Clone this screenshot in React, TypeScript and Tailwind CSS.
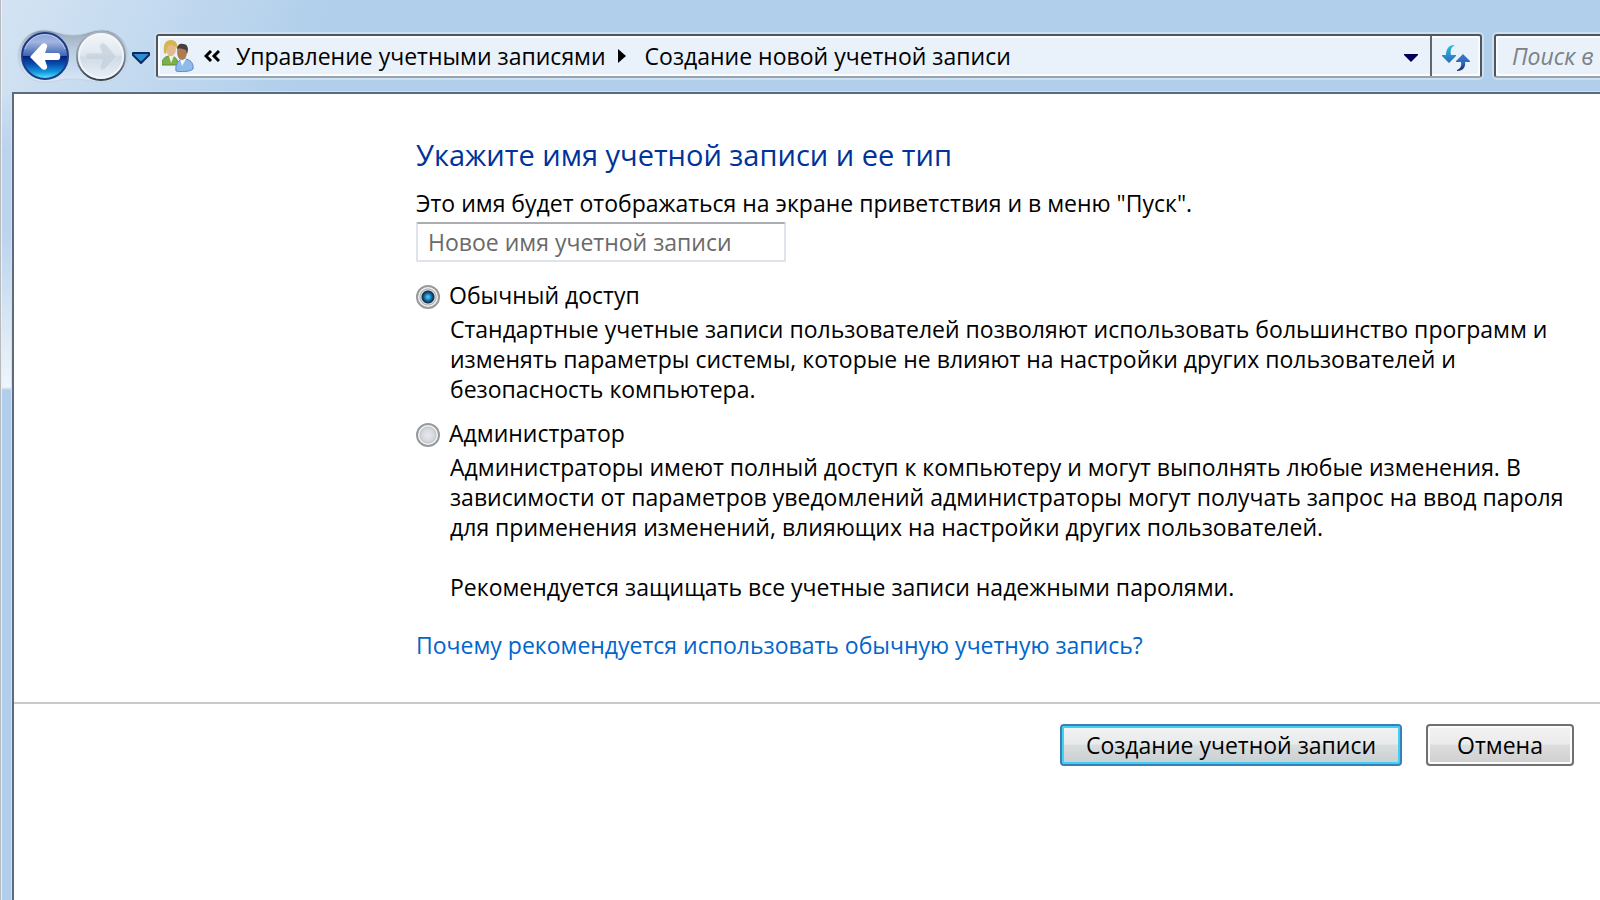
import React, { useState } from 'react'

interface AccountType {
    id: string;
    title: string;
    text: string[];
}

const accountTypes: AccountType[] = [
    {
        id: 'standard',
        title: 'Обычный доступ',
        text: [
            'Стандартные учетные записи пользователей позволяют использовать большинство программ и',
            'изменять параметры системы, которые не влияют на настройки других пользователей и',
            'безопасность компьютера.',
        ],
    },
    {
        id: 'admin',
        title: 'Администратор',
        text: [
            'Администраторы имеют полный доступ к компьютеру и могут выполнять любые изменения. В',
            'зависимости от параметров уведомлений администраторы могут получать запрос на ввод пароля',
            'для применения изменений, влияющих на настройки других пользователей.',
        ],
    },
]

const NavButtons = () => {
    return (
        <div className="relative flex items-center gap-[7px] w-[112px] h-[54px] pl-[4px]">
            <svg viewBox="0 0 112 54" className="absolute inset-0 size-full" aria-hidden="true">
                <defs>
                    <linearGradient id="pod" x1="0" y1="0" x2="0" y2="1">
                        <stop offset="0" stopColor="#7f90a2" />
                        <stop offset="0.12" stopColor="#a3b4c6" />
                        <stop offset="0.35" stopColor="#b9c9da" />
                        <stop offset="0.7" stopColor="#c6d9ee" />
                        <stop offset="1" stopColor="#dbe9f6" />
                    </linearGradient>
                </defs>
                <path d="M27 1 C37 1 43 6 56 6 C69 6 74 1 85 1 C100 1 111 13 111 27 C111 41 100 53 85 53 C75 53 68 50 56 50 C44 50 37 53 27 53 C12 53 1 41 1 27 C1 13 12 1 27 1 Z" fill="url(#pod)" stroke="#c2d3e4" strokeWidth="1" />
            </svg>
            <button aria-label="Назад" className="relative size-[48px] rounded-full">
                <svg viewBox="0 0 48 48" className="size-full">
                    <defs>
                        <linearGradient id="back" x1="0" y1="0" x2="0" y2="1">
                            <stop offset="0" stopColor="#8fa4d8" />
                            <stop offset="0.2" stopColor="#a3b4df" />
                            <stop offset="0.49" stopColor="#3c66b4" />
                            <stop offset="0.51" stopColor="#04207c" />
                            <stop offset="0.68" stopColor="#0a4fb0" />
                            <stop offset="0.85" stopColor="#1498e0" />
                            <stop offset="1" stopColor="#5cf0ff" />
                        </linearGradient>
                    </defs>
                    <circle cx="24" cy="24" r="23" fill="url(#back)" stroke="#1d3b86" strokeWidth="2" />
                    <path d="M4 17 A21 21 0 0 1 44 17" fill="none" stroke="#c4d2f0" strokeWidth="1" strokeOpacity="0.8" />
                    <path d="M9 25 L21 12 C23 10 27 12 26 15 L24 21 H37 C40 21 40 28 37 28 H24 L26 34 C27 37 23 39 21 37 Z" fill="#fff" />
                </svg>
            </button>
            <button aria-label="Вперед" className="relative size-[50px] rounded-full">
                <svg viewBox="0 0 50 50" className="size-full">
                    <defs>
                        <linearGradient id="forward" x1="0" y1="0" x2="0" y2="1">
                            <stop offset="0" stopColor="#f3f7fa" />
                            <stop offset="0.48" stopColor="#dfe7ee" />
                            <stop offset="0.52" stopColor="#cedae5" />
                            <stop offset="1" stopColor="#eaf2f8" />
                        </linearGradient>
                        <linearGradient id="rim" x1="0" y1="0" x2="0" y2="1">
                            <stop offset="0" stopColor="#a7b3bf" />
                            <stop offset="0.5" stopColor="#8793a0" />
                            <stop offset="1" stopColor="#39424d" />
                        </linearGradient>
                    </defs>
                    <circle cx="25" cy="25" r="24" fill="url(#forward)" stroke="url(#rim)" strokeWidth="2" />
                    <circle cx="25" cy="25" r="22" fill="none" stroke="#f4f8fb" strokeWidth="2" strokeOpacity="0.8" />
                    <path d="M41 26 L29 13 C27 11 23 13 24 16 L26 22 H12 C9 22 9 29 12 29 H26 L24 35 C23 38 27 40 29 38 Z" fill="#c5d2dd" fillOpacity="0.8" stroke="#dde6ed" strokeWidth="1" />
                </svg>
            </button>
        </div>
    )
}

const UsersIcon = () => (
    <svg viewBox="0 0 32 32" className="size-[32px]" aria-hidden="true">
        <path d="M0 25 C0 19 3 16 8 16 C13 16 16 19 16 25 Z" fill="#7db04a" stroke="#5f8f35" />
        <path d="M7 16 L9 23 L12 16 Z" fill="#eef5e2" />
        <ellipse cx="9" cy="9" rx="5" ry="7" fill="#e4b98d" />
        <path d="M2 13 C1 5 3 0 9 0 C14 0 16 4 15 9 C13 4 9 5 7 5 C4 7 5 11 4 14 Z" fill="#d5b550" />
        <path d="M14 31 C13 23 17 19 22 19 C28 19 32 23 31 29 C28 32 18 32 14 31 Z" fill="#8fbbea" stroke="#5a8bc6" />
        <path d="M18 19 L20 26 L24 19 Z" fill="#f3f8fd" />
        <ellipse cx="20" cy="12" rx="5" ry="8" fill="#b07a50" />
        <path d="M15 9 C15 5 18 3 21 4 C26 4 27 9 25 14 L24 10 C21 9 18 8 15 9 Z" fill="#43403d" />
    </svg>
)

const RefreshIcon = () => (
    <svg viewBox="0 0 30 28" className="w-[30px] h-[28px]" aria-hidden="true">
        <defs>
            <linearGradient id="down" x1="0" y1="0" x2="0" y2="1">
                <stop offset="0" stopColor="#25bfdc" />
                <stop offset="1" stopColor="#2f69bd" />
            </linearGradient>
            <linearGradient id="up" x1="0" y1="0" x2="0" y2="1">
                <stop offset="0" stopColor="#3579cc" />
                <stop offset="0.5" stopColor="#3268ba" />
                <stop offset="1" stopColor="#14265c" />
            </linearGradient>
        </defs>
        <path d="M13 1 C8 1 5 5 5 11 H1 V12 L8 19 L15 12 V11 H10 C9 7 10 3 13 2 Z" fill="url(#down)" />
        <path d="M16 27 C22 27 25 23 24 18 H29 V17 L22 10 L15 17 V18 H20 C21 22 19 25 16 26 Z" fill="url(#up)" />
    </svg>
)

const Header = () => {
    return (
        <header className="flex items-center h-[92px] pt-[20px] pl-[17px]">
            <NavButtons />
            <button aria-label="Последние страницы" className="ml-[3px] mt-[3px]">
                <svg viewBox="0 0 18 12" className="w-[18px] h-[12px]">
                    <path d="M1 1 H17 V3 L9 11 L1 3 Z" fill="#2a8fd0" stroke="#0d2a63" strokeWidth="2" strokeLinejoin="round" />
                </svg>
            </button>
            <div className="flex flex-1 items-center h-[44px] ml-[6px] rounded-[3px] border-2 border-[#50565e] border-b-[#98a4b0] bg-[#e9f1fa] shadow-[0_0_0_2px_#cde0f2,inset_0_0_0_2px_#fafcff]">
                <div className="flex flex-1 items-center pl-[4px]">
                    <UsersIcon />
                    <svg viewBox="0 0 16 12" className="w-[16px] h-[12px] ml-[10px] mr-[16px]" aria-hidden="true">
                        <path d="M7 1 L2 6 L7 11 M15 1 L10 6 L15 11" fill="none" stroke="#000" strokeWidth="3" />
                    </svg>
                    <span className="whitespace-nowrap">Управление учетными записями</span>
                    <svg viewBox="0 0 8 14" className="w-[8px] h-[14px] ml-[12px] mr-[19px]" aria-hidden="true">
                        <path d="M0 0 L8 7 L0 14 Z" />
                    </svg>
                    <span className="whitespace-nowrap">Создание новой учетной записи</span>
                </div>
                <button aria-label="Предыдущие расположения" className="px-[12px] pt-[3px]">
                    <svg viewBox="0 0 14 8" className="w-[14px] h-[8px]">
                        <path d="M0 0 H14 V1 L7 8 L0 1 Z" fill="#00005c" />
                    </svg>
                </button>
                <button aria-label="Обновить" className="flex items-center h-full pt-[3px] pl-[9px] pr-[9px] border-l-2 border-[#60666e]">
                    <RefreshIcon />
                </button>
            </div>
            <input
                type="text"
                aria-label="Поиск"
                placeholder="Поиск в"
                className="ml-[12px] w-[106px] h-[44px] pl-[16px] rounded-l-[3px] border-2 border-r-0 border-[#50565e] border-b-[#98a4b0] bg-[#e9f1fa] italic placeholder:text-[#7d8186] shadow-[0_0_0_2px_#cde0f2,inset_0_2px_0_0_#fafcff,inset_2px_-2px_0_0_#fafcff]"
            />
        </header>
    )
}

const App = () => {
    const [selected, setSelected] = useState('standard')

    return (
        <div className="min-h-screen flex flex-col overflow-hidden text-black text-[23px] leading-[30px] font-['Open_Sans',sans-serif] bg-[linear-gradient(to_right,#b9babd_1px,#e6eff8_1px,#e6eff8_2px,transparent_2px),linear-gradient(to_bottom,transparent_93px,#bcd3ee_150px,#bcd3ee_230px,#d0e2f3_300px,#eff5fa_387px,#b1cfeb_390px),linear-gradient(115deg,#d3e3f2_0px,#c9ddf1_100px,#b1cfeb_300px)]">
            <Header />
            <main className="flex-1 ml-[12px] border-t-2 border-l-2 border-[#5d6b7c] bg-white shadow-[0_0_0_1px_#cfe0f0]">
                <form onSubmit={(e) => e.preventDefault()}>
                    <div className="pl-[402px] pt-[41px] pb-[42px]">
                        <h1 className="text-[29px] leading-[40px] text-[#003399]">Укажите имя учетной записи и ее тип</h1>
                        <label htmlFor="name" className="block mt-[13px] mb-[4px]">Это имя будет отображаться на экране приветствия и в меню "Пуск".</label>
                        <input
                            id="name"
                            placeholder="Новое имя учетной записи"
                            className="block w-[370px] h-[40px] pl-[10px] rounded-[2px] border-2 border-[#dfe3ec] border-t-[#abadb3] placeholder:text-[#6a6a6a]"
                        />
                        <div className="flex flex-col gap-[14px] mt-[18px]">
                            {accountTypes.map((type) => (
                                <div key={type.id}>
                                    <label className="flex items-center gap-[9px]">
                                        <input
                                            type="radio"
                                            name="type"
                                            checked={selected === type.id}
                                            onChange={() => setSelected(type.id)}
                                            className="appearance-none size-[24px] mt-[4px] rounded-full border-2 border-[#97999b] bg-[radial-gradient(circle_at_center,#e6e9ec_0px,#d5d9de_6px,#c4c8cc_8px,#f4f4f4_9px)] checked:bg-[radial-gradient(circle_at_center,#5fd0f5_0px,#1a86c0_3px,#123c5e_5px,#17354f_6px,#dfe3e6_7px,#a9adb0_8px,#f4f4f4_9px)]"
                                        />
                                        {type.title}
                                    </label>
                                    <p className="ml-[34px] mt-[4px]">
                                        {type.text.map((line) => (
                                            <span key={line} className="block whitespace-nowrap">{line}</span>
                                        ))}
                                    </p>
                                </div>
                            ))}
                        </div>
                        <p className="ml-[34px] mt-[30px]">Рекомендуется защищать все учетные записи надежными паролями.</p>
                        <a href="#why" className="inline-block mt-[28px] text-[#0066cc]">Почему рекомендуется использовать обычную учетную запись?</a>
                    </div>
                    <div className="flex justify-end gap-[24px] pr-[26px] pt-[20px] border-t-2 border-[#c9c9c9]">
                        <button type="submit" className="h-[42px] w-[342px] rounded-[4px] border-2 border-[#3c7fb1] bg-[linear-gradient(to_bottom,#f2f3f3_0%,#e8eaeb_48%,#d9dedf_50%,#c8cfd2_100%)] shadow-[inset_0_0_0_2px_#3fd0f5]">Создание учетной записи</button>
                        <button type="button" className="h-[42px] w-[148px] rounded-[4px] border-2 border-[#707070] bg-[linear-gradient(to_bottom,#f2f2f2_0%,#ebebeb_48%,#dddddd_50%,#cfcfcf_100%)] shadow-[inset_0_0_0_2px_#fbfbfb]">Отмена</button>
                    </div>
                </form>
            </main>
        </div>
    )
}

export default App
